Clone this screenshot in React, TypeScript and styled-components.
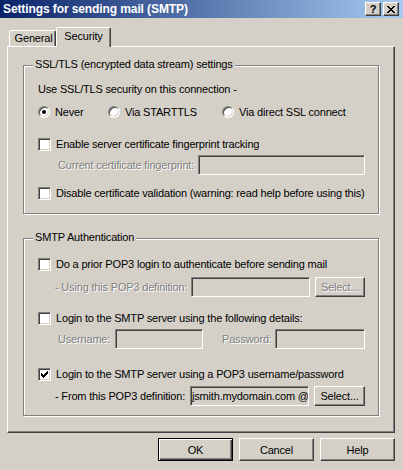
import React from 'react';
import styled, { createGlobalStyle } from 'styled-components';

const GlobalStyle = createGlobalStyle`
  html, body { margin: 0; padding: 0; background: #d4d0c8; }
  body { font-family: "Liberation Sans", Arial, sans-serif; font-size: 11px; letter-spacing: -0.18px; color: #000; }
  * { box-sizing: border-box; }
`;

const Window = styled.div`
  width: 403px;
  height: 470px;
  background: #d4d0c8;
  display: flex;
  flex-direction: column;
  overflow: hidden;
`;

const TitleBar = styled.div`
  height: 18px;
  flex: none;
  display: flex;
  align-items: center;
  padding: 0 4px 0 3px;
  background: linear-gradient(to right, #0a246a, #a6caf0);
`;

const Title = styled.div`
  flex: 1;
  color: #fff;
  font-weight: bold;
  font-size: 12px;
  letter-spacing: -0.1px;
  white-space: nowrap;
`;

const CaptionButtons = styled.div`
  display: flex;
  gap: 2px;
`;

const CaptionButton = styled.div`
  width: 16px;
  height: 14px;
  background: #d4d0c8;
  border: 1px solid;
  border-color: #fff #404040 #404040 #fff;
  box-shadow: inset -1px -1px 0 #808080;
  display: flex;
  align-items: center;
  justify-content: center;
  font-weight: bold;
  font-size: 11px;
  line-height: 1;
  letter-spacing: 0;
`;

const Body = styled.div`
  padding: 9px 8px 0 7px;
  display: flex;
  flex-direction: column;
`;

const TabRow = styled.div`
  display: flex;
  align-items: flex-end;
  height: 19px;
  padding-left: 2px;
  position: relative;
  z-index: 1;
`;

const Tab = styled.div<{ $active?: boolean; $w: number }>`
  width: ${(p) => p.$w}px;
  height: ${(p) => (p.$active ? 20 : 16)}px;
  margin-bottom: ${(p) => (p.$active ? -1 : 0)}px;
  background: #d4d0c8;
  border-style: solid;
  border-width: 1px 1px 0 1px;
  border-color: #fff #404040 transparent #fff;
  box-shadow: inset -1px 0 0 #808080;
  border-radius: 2px 2px 0 0;
  display: flex;
  justify-content: center;
  align-items: flex-start;
  padding-top: ${(p) => (p.$active ? 2 : 1)}px;
  padding-left: ${(p) => (p.$active ? 0 : 2)}px;
  line-height: 13px;
`;

const Panel = styled.div`
  height: 387px;
  border: 1px solid;
  border-color: #fff #404040 #404040 #fff;
  box-shadow: inset -1px -1px 0 #808080;
  padding: 18px 15px 0 15px;
  display: flex;
  flex-direction: column;
`;

const Group = styled.div<{ $h: number; $mt?: number; $pt: number }>`
  position: relative;
  height: ${(p) => p.$h}px;
  margin-top: ${(p) => p.$mt ?? 0}px;
  border: 1px solid #808080;
  box-shadow: inset 1px 1px 0 #fff, 1px 1px 0 #fff;
  padding: ${(p) => p.$pt}px 14px 0 14px;
  display: flex;
  flex-direction: column;
`;

const Legend = styled.span`
  position: absolute;
  top: -8px;
  left: 9px;
  padding: 0 2px;
  background: #d4d0c8;
  line-height: 13px;
  white-space: nowrap;
`;

const Row = styled.div<{ $mt?: number; $indent?: number }>`
  display: flex;
  align-items: center;
  height: 20px;
  flex: none;
  margin-top: ${(p) => p.$mt ?? 0}px;
  padding-left: ${(p) => p.$indent ?? 0}px;
  white-space: nowrap;
`;

const Text = styled.span<{ $disabled?: boolean; $w?: number; $pl?: number }>`
  color: ${(p) => (p.$disabled ? '#808080' : '#000')};
  text-shadow: ${(p) => (p.$disabled ? '1px 1px 0 #fff' : 'none')};
  ${(p) => (p.$w ? `width: ${p.$w}px; flex: none;` : '')}
  padding-left: ${(p) => p.$pl ?? 0}px;
  white-space: nowrap;
`;

const Check = styled.span`
  width: 13px;
  height: 13px;
  flex: none;
  margin-right: 5px;
  background: #fff;
  border: 1px solid;
  border-color: #808080 #fff #fff #808080;
  box-shadow: inset 1px 1px 0 #404040, inset -1px -1px 0 #d4d0c8;
  display: flex;
  align-items: center;
  justify-content: center;
`;

const RadioItem = styled.span<{ $w?: number }>`
  display: flex;
  align-items: center;
  ${(p) => (p.$w ? `width: ${p.$w}px; flex: none;` : '')}
`;

const Radio = styled.span`
  width: 12px;
  height: 12px;
  flex: none;
  margin-right: 5px;
  border-radius: 50%;
  background: #fff;
  border: 1px solid;
  border-color: #808080 #fff #fff #808080;
  box-shadow: inset 1px 1px 0 #404040, inset -1px -1px 0 #d4d0c8;
  display: flex;
  align-items: center;
  justify-content: center;
`;

const Dot = styled.span`
  width: 4px;
  height: 4px;
  border-radius: 50%;
  background: #000;
`;

const Field = styled.div<{ $w: number }>`
  width: ${(p) => p.$w}px;
  height: 20px;
  flex: none;
  background: #d4d0c8;
  border: 1px solid;
  border-color: #808080 #fff #fff #808080;
  box-shadow: inset 1px 1px 0 #404040, inset -1px -1px 0 #d4d0c8;
  padding: 0 0 0 1px;
  display: flex;
  align-items: center;
  overflow: hidden;
  white-space: nowrap;
`;

const Button = styled.div<{ $w: number; $h: number; $default?: boolean; $disabled?: boolean; $ml?: number }>`
  width: ${(p) => p.$w}px;
  height: ${(p) => p.$h}px;
  flex: none;
  margin-left: ${(p) => p.$ml ?? 0}px;
  background: #d4d0c8;
  border: 1px solid;
  border-color: ${(p) => (p.$default ? '#000' : '#fff #404040 #404040 #fff')};
  box-shadow: ${(p) =>
    p.$default
      ? 'inset 1px 1px 0 #fff, inset -1px -1px 0 #404040, inset -2px -2px 0 #808080'
      : 'inset -1px -1px 0 #808080'};
  display: flex;
  align-items: center;
  justify-content: center;
  color: ${(p) => (p.$disabled ? '#808080' : '#000')};
  text-shadow: ${(p) => (p.$disabled ? '1px 1px 0 #fff' : 'none')};
`;

const ButtonBar = styled.div`
  display: flex;
  justify-content: flex-end;
  gap: 6px;
  margin-top: 5px;
`;

const CheckMark = () => (
  <svg width="7" height="7" viewBox="0 0 7 7" shapeRendering="crispEdges">
    <path d="M0 2h1v3h-1zM1 3h1v3h-1zM2 4h1v3h-1zM3 3h1v3h-1zM4 2h1v3h-1zM5 1h1v3h-1zM6 0h1v3h-1z" fill="#000" />
  </svg>
);

const CloseGlyph = () => (
  <svg width="8" height="7" viewBox="0 0 8 7" shapeRendering="crispEdges">
    <path d="M0 0h2v1h-2zM6 0h2v1h-2zM1 1h2v1h-2zM5 1h2v1h-2zM2 2h4v1h-4zM3 3h2v1h-2zM2 4h4v1h-4zM1 5h2v1h-2zM5 5h2v1h-2zM0 6h2v1h-2zM6 6h2v1h-2z" fill="#000" />
  </svg>
);

export default function App() {
  return (
    <>
      <GlobalStyle />
      <Window>
        <TitleBar>
          <Title>Settings for sending mail (SMTP)</Title>
          <CaptionButtons>
            <CaptionButton>?</CaptionButton>
            <CaptionButton>
              <CloseGlyph />
            </CaptionButton>
          </CaptionButtons>
        </TitleBar>
        <Body>
          <TabRow>
            <Tab $w={47}>General</Tab>
            <Tab $w={55} $active>
              Security
            </Tab>
          </TabRow>
          <Panel>
            <Group $h={149} $pt={13}>
              <Legend>SSL/TLS (encrypted data stream) settings</Legend>
              <Row>
                <Text>Use SSL/TLS security on this connection -</Text>
              </Row>
              <Row $mt={3}>
                <RadioItem $w={70}>
                  <Radio>
                    <Dot />
                  </Radio>
                  <Text>Never</Text>
                </RadioItem>
                <RadioItem $w={114}>
                  <Radio />
                  <Text>Via STARTTLS</Text>
                </RadioItem>
                <RadioItem>
                  <Radio />
                  <Text>Via direct SSL connect</Text>
                </RadioItem>
              </Row>
              <Row $mt={12}>
                <Check />
                <Text>Enable server certificate fingerprint tracking</Text>
              </Row>
              <Row $mt={1} $indent={20}>
                <Text $disabled $w={140}>
                  Current certificate fingerprint:
                </Text>
                <Field $w={167} />
              </Row>
              <Row $mt={8}>
                <Check />
                <Text>Disable certificate validation (warning: read help before using this)</Text>
              </Row>
            </Group>
            <Group $h={178} $mt={24} $pt={15}>
              <Legend>SMTP Authentication</Legend>
              <Row>
                <Check />
                <Text>Do a prior POP3 login to authenticate before sending mail</Text>
              </Row>
              <Row $mt={3} $indent={17}>
                <Text $disabled $w={136}>
                  - Using this POP3 definition:
                </Text>
                <Field $w={119} />
                <Button $w={50} $h={20} $ml={5} $disabled>
                  Select...
                </Button>
              </Row>
              <Row $mt={11}>
                <Check />
                <Text>Login to the SMTP server using the following details:</Text>
              </Row>
              <Row $mt={1} $indent={20}>
                <Text $disabled $w={57}>
                  Username:
                </Text>
                <Field $w={88} />
                <Text $disabled $w={72} $pl={19}>
                  Password:
                </Text>
                <Field $w={90} />
              </Row>
              <Row $mt={15}>
                <Check>
                  <CheckMark />
                </Check>
                <Text>Login to the SMTP server using a POP3 username/password</Text>
              </Row>
              <Row $mt={2} $indent={17}>
                <Text $w={135}>- From this POP3 definition:</Text>
                <Field $w={119}>jsmith.mydomain.com @</Field>
                <Button $w={51} $h={20} $ml={5}>
                  Select...
                </Button>
              </Row>
            </Group>
          </Panel>
          <ButtonBar>
            <Button $w={75} $h={23} $default>
              OK
            </Button>
            <Button $w={75} $h={23}>
              Cancel
            </Button>
            <Button $w={75} $h={23}>
              Help
            </Button>
          </ButtonBar>
        </Body>
      </Window>
    </>
  );
}
